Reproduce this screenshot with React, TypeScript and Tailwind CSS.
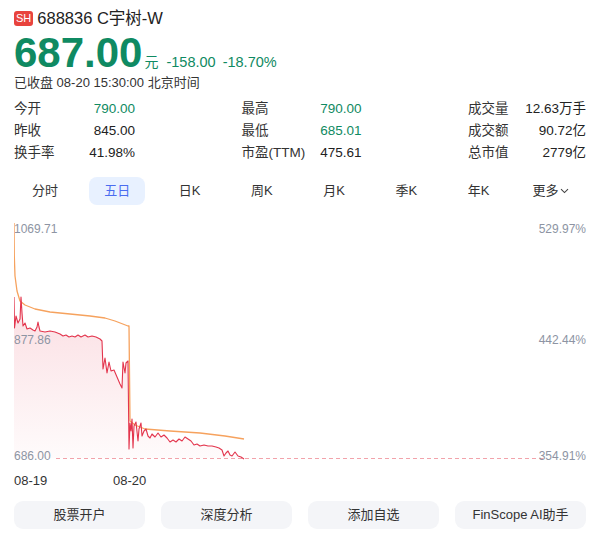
import React from "react";

const GREEN = "text-[#0f8a62]";

// Intraday price trace (page coordinates; the svg group is shifted to the chart origin)
const priceLine: [number, number][] = [
  [14, 296], [14.5, 327], [16, 315], [18, 322], [20, 318], [21, 296], [22, 312], [23, 325],
  [25, 322], [27, 328], [30, 327], [33, 329], [35, 330], [37, 326], [38, 321], [39, 326],
  [40, 330], [45, 331], [50, 330], [55, 331], [60, 333], [63, 335], [66, 334], [69, 336],
  [72, 335], [75, 336], [78, 334], [81, 336], [85, 334], [88, 336], [92, 335], [96, 336],
  [100, 338], [102, 340], [103, 368], [105, 357], [107, 372], [109, 361], [111, 370],
  [114, 369], [117, 376], [120, 383], [122, 387], [123, 361], [125, 372], [126, 362],
  [128, 360], [129, 448], [130, 422], [131, 430], [132, 418], [133, 447], [134, 425],
  [136, 421], [138, 440], [139, 428], [141, 422], [142, 435], [144, 430], [146, 428],
  [148, 435], [150, 437], [152, 433], [155, 436], [158, 432], [161, 436], [164, 434],
  [167, 437], [170, 441], [173, 439], [176, 441], [179, 438], [182, 440], [185, 436],
  [188, 438], [191, 440], [194, 444], [197, 443], [200, 445], [204, 444], [208, 445],
  [212, 445], [216, 446], [219, 447], [222, 449], [224, 455], [226, 452], [228, 450],
  [230, 454], [232, 455], [235, 451], [238, 455], [241, 456], [244, 458],
];

// Average price trace
const avgLine: [number, number][] = [
  [14, 222], [14.3, 255], [15, 275], [17, 290], [20, 300], [25, 304], [35, 308], [50, 311],
  [70, 313], [90, 315], [105, 317], [115, 320], [128, 325], [129, 325], [130, 420],
  [135, 424], [145, 428], [170, 430], [200, 432], [225, 435], [244, 438],
];

const toPath = (pts: [number, number][]) =>
  pts.map(([x, y], i) => `${i === 0 ? "M" : "L"}${x} ${y}`).join(" ");

const areaPath = toPath(priceLine) + ` L244 457 L14 457 Z`;

type Stat = { label: string; value: string; green?: boolean };

const columns: { width: string; items: Stat[] }[] = [
  {
    width: "w-[121px]",
    items: [
      { label: "今开", value: "790.00", green: true },
      { label: "昨收", value: "845.00" },
      { label: "换手率", value: "41.98%" },
    ],
  },
  {
    width: "w-[120px]",
    items: [
      { label: "最高", value: "790.00", green: true },
      { label: "最低", value: "685.01", green: true },
      { label: "市盈(TTM)", value: "475.61" },
    ],
  },
  {
    width: "w-[118px]",
    items: [
      { label: "成交量", value: "12.63万手" },
      { label: "成交额", value: "90.72亿" },
      { label: "总市值", value: "2779亿" },
    ],
  },
];

const tabs = ["分时", "五日", "日K", "周K", "月K", "季K", "年K"];

const actions = ["股票开户", "深度分析", "添加自选", "FinScope AI助手"];

export default function App() {
  return (
    <div
      className="w-[600px] h-[541px] bg-white px-[14px] text-[#333] overflow-hidden"
      style={{ fontFamily: '"Liberation Sans", "Noto Sans CJK SC", sans-serif' }}
    >
      {/* Ticker */}
      <div className="pt-[8px] flex items-center gap-[4px] h-[28px]">
        <span className="h-[15px] px-[2px] rounded-[3px] bg-[#e8433d] text-white text-[11px] leading-[15px] flex items-center">
          SH
        </span>
        <span className="text-[16.5px] leading-[20px] text-[#222]">688836 C宇树-W</span>
      </div>

      {/* Price */}
      <div className={`mt-[4px] flex items-baseline ${GREEN}`}>
        <span className="text-[42px] leading-[41px] font-bold">687.00</span>
        <span className="text-[14px] ml-[2px]">元</span>
        <span className="text-[14.5px] ml-[8px]">-158.00</span>
        <span className="text-[14.5px] ml-[7px]">-18.70%</span>
      </div>

      <div className="text-[13px] leading-[18px] text-[#333]">已收盘 08-20 15:30:00 北京时间</div>

      {/* Quote stats */}
      <div className="mt-[6px] flex justify-between">
        {columns.map((col, ci) => (
          <div key={ci} className={col.width}>
            {col.items.map((s) => (
              <div key={s.label} className="h-[22px] flex items-center justify-between text-[13.5px]">
                <span className="text-[#333]">{s.label}</span>
                <span className={s.green ? GREEN : "text-[#222]"}>{s.value}</span>
              </div>
            ))}
          </div>
        ))}
      </div>

      {/* Period tabs */}
      <div className="mt-[13px] flex justify-between pl-[3px] pr-[7px]">
        {tabs.map((t) => (
          <div
            key={t}
            className={`w-[56px] h-[28px] rounded-[8px] flex items-center justify-center text-[13px] ${
              t === "五日" ? "bg-[#e8f1ff] text-[#4a6cf0]" : "text-[#333]"
            }`}
          >
            {t}
          </div>
        ))}
        <div className="w-[56px] h-[28px] flex items-center justify-center gap-[2px] text-[13px] text-[#333]">
          更多
          <svg width="9" height="6" viewBox="0 0 9 6" fill="none">
            <path d="M1 1.2 L4.5 4.6 L8 1.2" stroke="#444" strokeWidth="1.1" />
          </svg>
        </div>
      </div>

      {/* Five-day chart */}
      <div className="relative mt-[14px] h-[244px]">
        <svg className="absolute inset-0" width="576" height="244" viewBox="0 0 576 244">
          <defs>
            <linearGradient id="fill" x1="0" y1="296" x2="0" y2="457" gradientUnits="userSpaceOnUse">
              <stop offset="0" stopColor="#e5304a" stopOpacity="0.16" />
              <stop offset="1" stopColor="#e5304a" stopOpacity="0.02" />
            </linearGradient>
          </defs>
          <g transform="translate(-14,-218)">
            <line x1="56" y1="457.5" x2="543" y2="457.5" stroke="#f2a3ab" strokeWidth="1" strokeDasharray="4 3" />
            <path d={areaPath} fill="url(#fill)" />
            <path d={toPath(avgLine)} fill="none" stroke="#f6a25e" strokeWidth="1.3" strokeLinejoin="round" />
            <path d={toPath(priceLine)} fill="none" stroke="#e3354d" strokeWidth="1.1" strokeLinejoin="round" />
          </g>
        </svg>
        <span className="absolute left-0 top-[3px] text-[12px] leading-[14px] text-[#8d94a3]">1069.71</span>
        <span className="absolute left-0 top-[114px] text-[12px] leading-[14px] text-[#8d94a3]">877.86</span>
        <span className="absolute left-0 top-[230px] text-[12px] leading-[14px] text-[#8d94a3]">686.00</span>
        <span className="absolute right-0 top-[3px] text-[12px] leading-[14px] text-[#8d94a3]">529.97%</span>
        <span className="absolute right-0 top-[114px] text-[12px] leading-[14px] text-[#8d94a3]">442.44%</span>
        <span className="absolute right-0 top-[230px] text-[12px] leading-[14px] text-[#8d94a3]">354.91%</span>
      </div>

      {/* Day axis */}
      <div className="mt-[9px] flex text-[13px] leading-[18px] text-[#333]">
        <span className="w-[99px]">08-19</span>
        <span>08-20</span>
      </div>

      {/* Actions */}
      <div className="mt-[11px] grid grid-cols-4 gap-[16px]">
        {actions.map((a) => (
          <div
            key={a}
            className="h-[28px] rounded-[9px] bg-[#f4f5f8] flex items-center justify-center text-[13px] text-[#333]"
          >
            {a}
          </div>
        ))}
      </div>
    </div>
  );
}
